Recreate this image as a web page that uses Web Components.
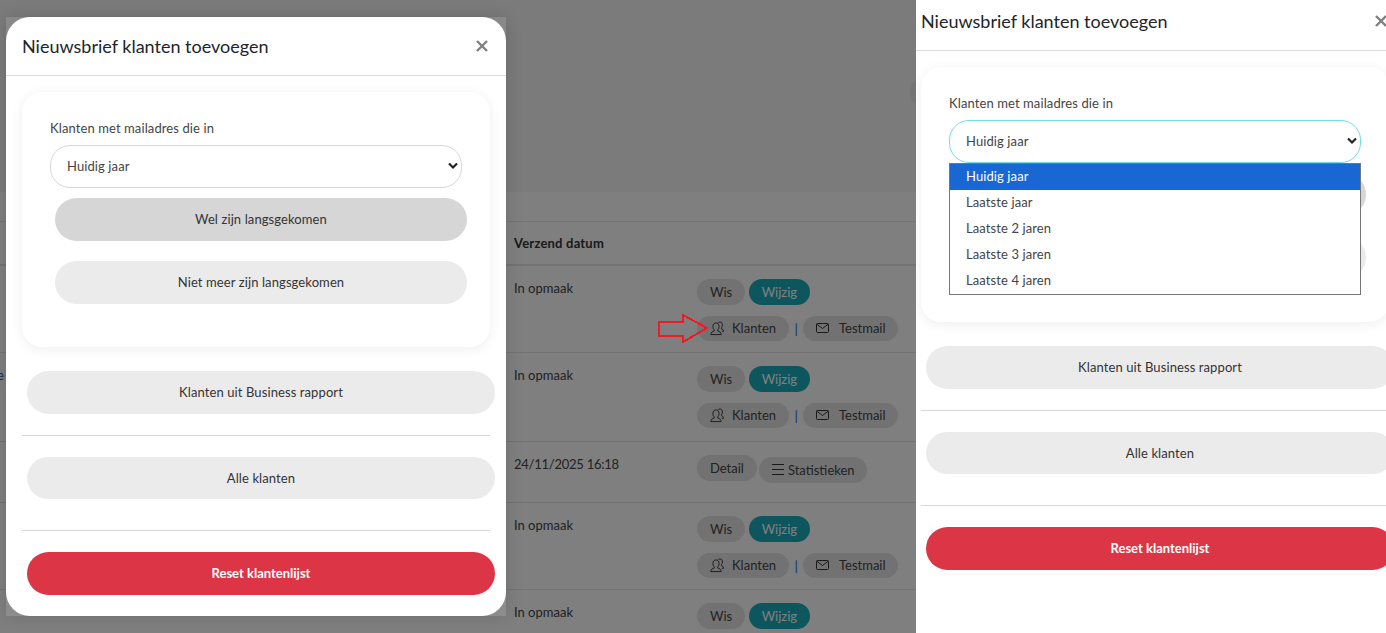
<!DOCTYPE html>
<html lang="nl">
<head>
<meta charset="utf-8">
<title>Nieuwsbrief klanten toevoegen</title>
<style>
html, body { margin: 0; height: 100%; background: #fff; overflow: hidden; }
body { font: 13px/18px Lato, "Noto Sans", sans-serif; color: #212529; }
</style>
</head>
<body>
<nb-app></nb-app>

<template id="nb-app-t">
  <style>
    :host { display: grid; grid-template-columns: 916px 470px; width: 1386px; height: 633px; overflow: hidden; }
    .scene { position: relative; overflow: hidden; height: 633px; }
    .shade { position: absolute; inset: 0; background: rgba(0,0,0,.5); }
    .arrow { position: absolute; left: 657px; top: 313px; shape-rendering: crispEdges; }
    newsletter-dialog[floating] { position: absolute; left: 6px; top: 17px; }
    .pane { background: #fff; overflow: hidden; height: 633px; }
    .pane newsletter-dialog { margin: -8px 0 0 -11px; }
  </style>
  <div class="scene">
    <mail-list></mail-list>
    <div class="shade"></div>
    <newsletter-dialog floating></newsletter-dialog>
    <svg class="arrow" width="53" height="31" viewBox="0 0 53 31" fill="none" stroke="#ed1c24" stroke-width="2">
      <path d="M2 8.500h24V2l24 13-24 14v-6.500H2z"/>
    </svg>
  </div>
  <div class="pane">
    <newsletter-dialog open></newsletter-dialog>
  </div>
</template>

<template id="mail-list-t">
  <style>
    :host { display: block; background: #fff; height: 633px; }
    .top { height: 192px; background: #f6f6f6; display: flex; justify-content: flex-end; align-items: flex-start; overflow: hidden; }
    .top i { display: block; width: 40px; height: 34px; margin: 75px -34px 0 0; border-radius: 17px; background: #eaeaea; }
    .gap { height: 29px; border-bottom: 1px solid #e6e6e6; }
    .head { height: 42px; border-bottom: 2px solid #e6e6e6; display: grid; grid-template-columns: 514px 1fr; align-items: center; font-weight: 700; color: #333; letter-spacing: .2px; }
    .head span { grid-column: 2; }
    .dash { display: block; width: 8px; height: 1px; margin: 5px 0 0 413px; background: #000; }
    .lead { display: block; margin-left: -3px; color: #2a5a9a; }
    .stats { margin-left: -2px; }
  </style>
  <div class="top"><i></i></div>
  <div class="gap"></div>
  <div class="head"><span>Verzend datum</span></div>
  <mail-row h="87" date="In opmaak"><pill-btn>Wis</pill-btn><pill-btn kind="teal">Wijzig</pill-btn><mail-tools slot="tools"></mail-tools></mail-row>
  <mail-row h="89" date="In opmaak"><span class="lead" slot="lead">e</span><pill-btn>Wis</pill-btn><pill-btn kind="teal">Wijzig</pill-btn><mail-tools slot="tools"></mail-tools></mail-row>
  <mail-row h="61" date="24/11/2025 16:18" tight><pill-btn>Detail</pill-btn><pill-btn stats class="stats"><app-icon name="menu"></app-icon>Statistieken</pill-btn></mail-row>
  <mail-row h="87" date="In opmaak"><pill-btn>Wis</pill-btn><pill-btn kind="teal">Wijzig</pill-btn><mail-tools slot="tools"></mail-tools></mail-row>
  <mail-row h="60" date="In opmaak"><span class="dash" slot="lead"></span><pill-btn>Wis</pill-btn><pill-btn kind="teal">Wijzig</pill-btn></mail-row>
</template>

<template id="mail-row-t">
  <style>
    :host { display: grid; grid-template-columns: 514px 183px 1fr; border-bottom: 1px solid #e6e6e6; box-sizing: border-box; color: #444; }
    :host([tight]) .date { letter-spacing: -.25px; }
    .lead { padding-top: 13px; }
    .date { padding-top: 13px; }
    .acts { padding-top: 13px; display: flex; flex-direction: column; gap: 11px; align-items: flex-start; }
    .line { display: flex; gap: 4px; align-items: flex-start; }
  </style>
  <div class="lead"><slot name="lead"></slot></div>
  <div class="date"></div>
  <div class="acts">
    <div class="line"><slot></slot></div>
    <slot name="tools"></slot>
  </div>
</template>

<template id="mail-tools-t">
  <style>
    :host { display: flex; align-items: center; gap: 6px; }
    span { color: #4a8fd6; font-weight: 700; line-height: 18px; margin-right: -1px; }
    app-icon[name="people"] { margin-right: -2px; }
  </style>
  <pill-btn tool><app-icon name="people"></app-icon>Klanten</pill-btn>
  <span>|</span>
  <pill-btn tool><app-icon name="mail"></app-icon>Testmail</pill-btn>
</template>

<template id="pill-btn-t">
  <style>
    :host { display: inline-flex; align-items: center; height: 26px; padding: 0 13px 1px; border-radius: 13px; background: #e4e4e4; color: #444; white-space: nowrap; box-sizing: border-box; }
    :host([kind="teal"]) { background: #1aacbc; color: #fff; padding: 0 12.500px 1px; }
    :host([tool]) { height: 25px; padding: 0 12.500px 1px 13px; gap: 10px; }
    :host([stats]) { margin-top: 2px; padding: 0 12px 1px 13px; gap: 4px; }
  </style>
  <slot></slot>
</template>

<template id="newsletter-dialog-t">
  <style>
    :host { display: block; width: 500px; height: 599px; background: rgba(255,255,255,.1); letter-spacing: .1px; }
    :host([floating]) { box-shadow: 0 0 16px rgba(0,0,0,.14); }
    .sheet { height: 100%; border-radius: 24px; background: #fff; box-sizing: border-box; }
    header { height: 58px; border-bottom: 1px solid #dcdcdc; display: flex; align-items: center; justify-content: space-between; padding: 0 18px 0 16px; }
    h2 { margin: 0; font-size: 18px; font-weight: 400; line-height: 24px; color: #212529; letter-spacing: 0; }
    .body { padding: 16px; }
    nb-button + nb-button { margin-top: 20px; }
    .first { margin-top: 10px; }
    hr { border: 0; border-top: 1px solid #d8d8d8; margin: 0; }
    .card { height: 255px; box-sizing: border-box; padding: 27px 28px 0; border-radius: 20px; background: #fff; box-shadow: 0 2px 12px rgba(0,0,0,.07); margin-bottom: 24px; }
    .rule-a { margin: 21px 0 21px; }
    .rule-b { margin: 31px 0 21px; }
  </style>
  <div class="sheet">
    <header>
      <h2>Nieuwsbrief klanten toevoegen</h2>
      <svg width="12" height="12" viewBox="0 0 12 12" stroke="#808080" stroke-width="2.400" aria-label="Sluiten"><path d="M1 1l10 10M11 1L1 11"/></svg>
    </header>
    <div class="body">
      <div class="card">
        <nb-select label="Klanten met mailadres die in"></nb-select>
        <nb-button class="first" kind="on">Wel zijn langsgekomen</nb-button>
        <nb-button>Niet meer zijn langsgekomen</nb-button>
      </div>
      <nb-button>Klanten uit Business rapport</nb-button>
      <hr class="rule-a">
      <nb-button short>Alle klanten</nb-button>
      <hr class="rule-b">
      <nb-button kind="danger">Reset klantenlijst</nb-button>
    </div>
  </div>
</template>

<template id="nb-button-t">
  <style>
    :host { display: flex; align-items: center; justify-content: center; width: 100%; height: 43px; box-sizing: border-box; padding-bottom: 1px; margin-left: 5px; border-radius: 22px; background: #ebebeb; color: #333; }
    :host([kind="on"]) { background: #d6d6d6; }
    :host([short]) { height: 42px; padding-bottom: 0; }
    :host([kind="danger"]) { background: #dc3545; color: #fff; font-weight: 700; letter-spacing: 0; }
  </style>
  <slot></slot>
</template>

<template id="nb-select-t">
  <style>
    :host { display: block; position: relative; }
    label { display: block; height: 18px; margin-bottom: 8px; color: #444; }
    .box { position: relative; height: 43px; }
    select { appearance: none; display: block; width: 100%; height: 100%; box-sizing: border-box; padding: 0 16px 2px; border: 1px solid #d8d8d8; border-radius: 20px; background: #fff; font: inherit; letter-spacing: inherit; color: #444; outline: 0; }
    :host([open]) select { border-color: #72dde4; }
    svg { position: absolute; right: 4px; top: 17px; pointer-events: none; }
    ul { display: none; position: absolute; z-index: 2; left: 0; right: 0; top: 69px; margin: 0; padding: 0; list-style: none; border: 1px solid #767676; background: #fff; }
    :host([open]) ul { display: block; }
    li { height: 26px; line-height: 25px; padding-left: 16px; color: #444; }
    li:first-child { background: #1967d2; color: #fff; }
  </style>
  <label></label>
  <div class="box">
    <select><option>Huidig jaar</option><option>Laatste jaar</option><option>Laatste 2 jaren</option><option>Laatste 3 jaren</option><option>Laatste 4 jaren</option></select>
    <svg width="10" height="8" viewBox="0 0 10 8" fill="none" stroke="#222" stroke-width="2.200"><path d="M1 1.500l4 4 4-4"/></svg>
  </div>
  <ul><li>Huidig jaar</li><li>Laatste jaar</li><li>Laatste 2 jaren</li><li>Laatste 3 jaren</li><li>Laatste 4 jaren</li></ul>
</template>

<script>
"use strict";

const ICONS = {
  people: '<svg width="14" height="15" viewBox="0 0 15 16" fill="none" stroke="currentColor" stroke-width="1"><path d="M.8 14.500c0-2.500 2-3.200 3.700-3.800V9.500C3.600 8.800 3.100 7.500 3.100 5.800c0-2.400 1.500-3.800 3.300-3.800s3.300 1.400 3.300 3.800c0 1.700-.5 3-1.400 3.700v1.200c1.700.6 3.700 1.300 3.700 3.800z"/><path d="M8.800 1.900c.4-.6 1-.9 1.800-.9 1.600 0 2.700 1.300 2.700 3.200 0 1.300-.4 2.400-1.100 3v1c1.100.4 2.400 1 2.400 2.800h-2"/></svg>',
  mail: '<svg width="13" height="10" viewBox="0 0 13 10" fill="none" stroke="currentColor" stroke-width="1"><rect x=".5" y=".5" width="12" height="9" rx="1"/><path d="M.8 1.200L6.500 5.500l5.700-4.300"/></svg>',
  menu: '<svg width="12" height="11" viewBox="0 0 12 11" stroke="currentColor" stroke-width="1"><path d="M0 .5h12M0 5.500h12M0 10.500h12"/></svg>'
};

function define(tag, setup) {
  const template = document.getElementById(tag + "-t");
  customElements.define(tag, class extends HTMLElement {
    constructor() {
      super();
      if (template) this.attachShadow({ mode: "open" }).appendChild(template.content.cloneNode(true));
    }
    connectedCallback() {
      if (setup) setup(this);
    }
  });
}

customElements.define("app-icon", class extends HTMLElement {
  constructor() {
    super();
    this.attachShadow({ mode: "open" });
  }
  connectedCallback() {
    this.shadowRoot.innerHTML = '<style>:host{display:inline-flex;color:#333}</style>' + ICONS[this.getAttribute("name")];
  }
});

define("pill-btn");
define("nb-button");
define("mail-tools");
define("mail-list");
define("nb-app");
define("mail-row", (el) => {
  el.style.height = el.getAttribute("h") + "px";
  el.shadowRoot.querySelector(".date").textContent = el.getAttribute("date");
});
define("nb-select", (el) => {
  el.shadowRoot.querySelector("label").textContent = el.getAttribute("label");
});
define("newsletter-dialog", (el) => {
  if (el.hasAttribute("open")) el.shadowRoot.querySelector("nb-select").setAttribute("open", "");
});
</script>
</body>
</html>
